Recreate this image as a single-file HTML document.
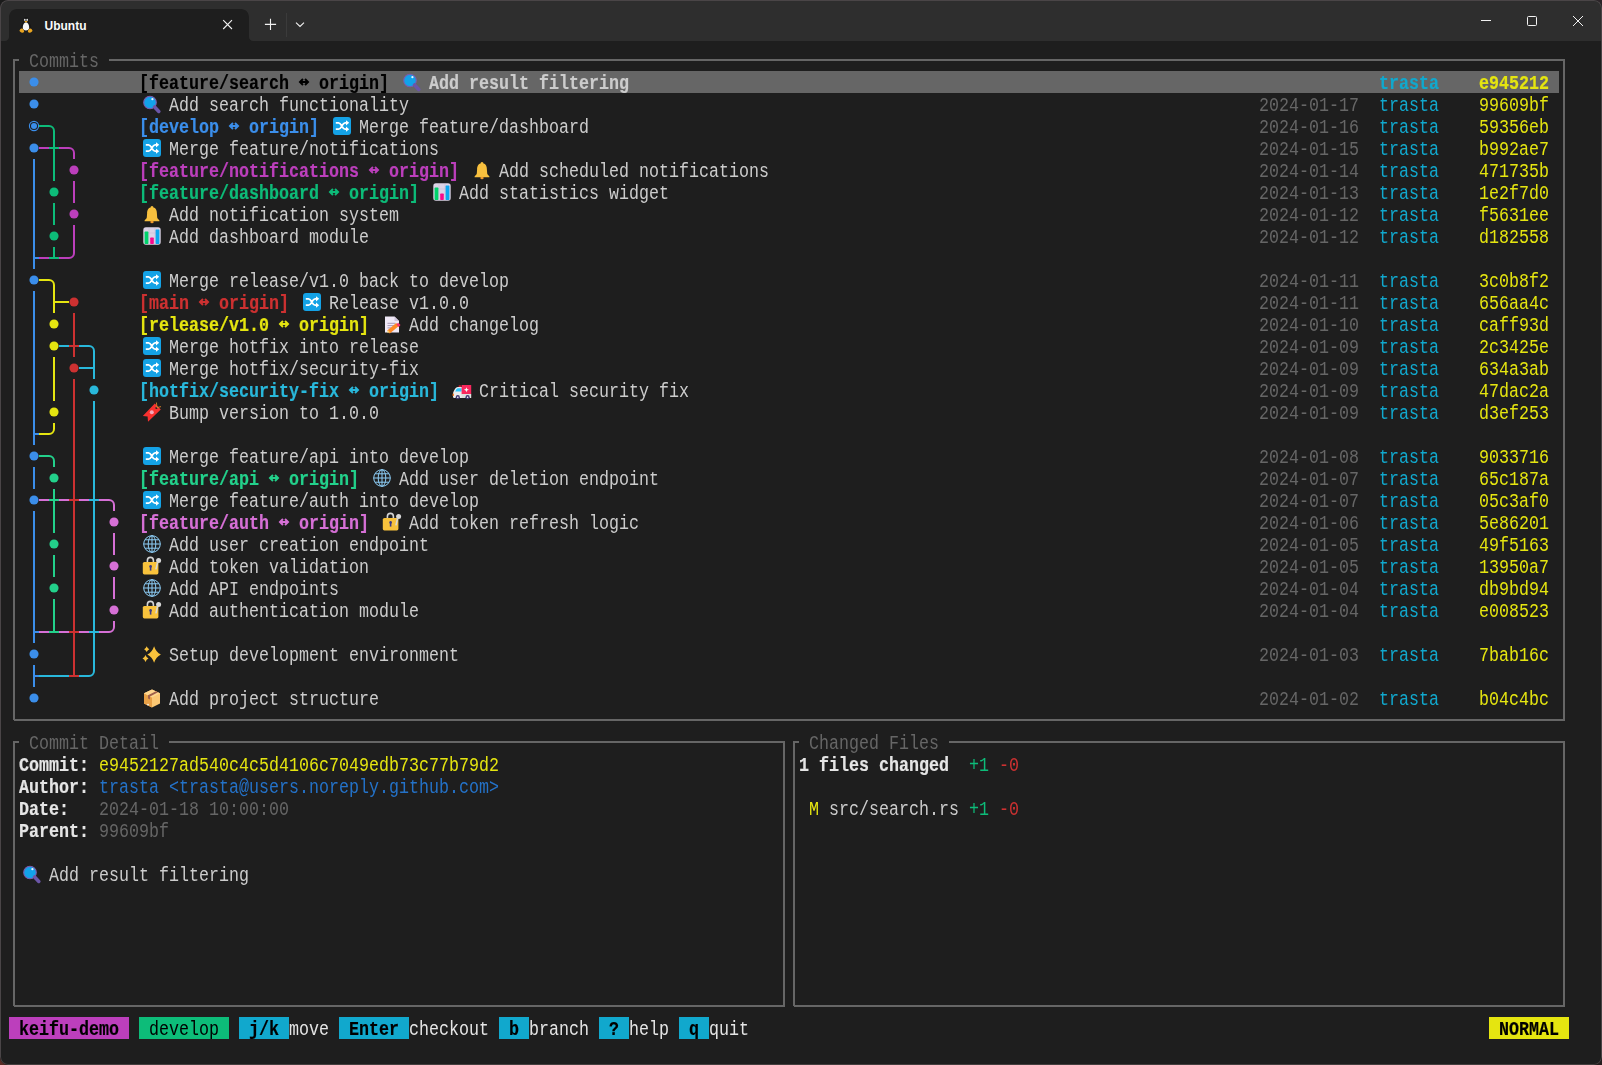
<!DOCTYPE html><html><head><meta charset="utf-8"><title>keifu</title><style>

html,body{margin:0;padding:0}
body{width:1602px;height:1065px;overflow:hidden;background:#2a2327;position:relative}
.cn{position:absolute;width:12px;height:12px}
#win{position:absolute;left:0;top:0;width:1602px;height:1065px;background:#1e1e1e;border-radius:8px;overflow:hidden}
#frame{position:absolute;left:0;top:0;width:1600px;height:1063px;border:1px solid #4a4547;border-bottom-color:#453f3f;border-radius:8px;pointer-events:none}
.t{position:absolute;white-space:pre;font-family:"Liberation Mono",monospace;font-size:20px;line-height:22px;transform:scaleX(0.8333);transform-origin:0 0}
.b{font-weight:bold;-webkit-text-stroke:0.2px currentColor}
.bgc{position:absolute;height:22px}
svg{overflow:visible}
#txt{position:absolute;left:0;top:0;width:1602px;height:1065px;will-change:transform}

</style></head><body><div class="cn" style="left:0;top:0;background:#1b1b1b"></div><div class="cn" style="right:0;top:0;background:#2c2429"></div><div class="cn" style="left:0;bottom:0;background:#5a2b25"></div><div class="cn" style="right:0;bottom:0;background:#261d1d"></div><div id="win">
<div style="position:absolute;left:0;top:0;width:1602px;height:41px;background:#2e2e2e"></div>
<svg style="position:absolute;left:0;top:0" width="1602" height="1065"><path d="M0 41H5C7.2 41 9 39.2 9 37V17C9 12.6 12.6 9 17 9H241C245.4 9 249 12.6 249 17V37C249 39.2 250.8 41 253 41Z" fill="#1e1e1e"/><path d="M223.2 20.2L232 29M232 20.2L223.2 29" stroke="#f2f2f2" stroke-width="1.1"/><path d="M270.5 18.8V30M264.9 24.4H276.1" stroke="#f2f2f2" stroke-width="1.1"/><path d="M286.6 13V37" stroke="#3d3d3d" stroke-width="1"/><path d="M296 22.6L300 26.4L304 22.6" stroke="#f2f2f2" stroke-width="1.1" fill="none"/><path d="M1481 20.5H1491" stroke="#f2f2f2" stroke-width="1"/><rect x="1527.5" y="16.5" width="9" height="9" rx="1" stroke="#f2f2f2" stroke-width="1" fill="none"/><path d="M1573 16L1583 26M1583 16L1573 26" stroke="#f2f2f2" stroke-width="1"/><g transform="translate(19.5,17)"><path d="M6.5 0C4.6 0 3.8 1.5 3.8 3.4C3.8 4.8 3.3 5.8 2.4 7.2C1.3 8.9 0.9 10.6 1.2 12.2L4 14.2H9L11.8 12.2C12.1 10.6 11.7 8.9 10.6 7.2C9.7 5.8 9.2 4.8 9.2 3.4C9.2 1.5 8.4 0 6.5 0Z" fill="#161616"/><path d="M6.5 5.2C4.6 5.2 3.5 7.8 3.3 10C3.1 12 4.4 13.6 6.5 13.6C8.6 13.6 9.9 12 9.7 10C9.5 7.8 8.4 5.2 6.5 5.2Z" fill="#f7f7f7"/><ellipse cx="5.3" cy="2.9" rx="0.9" ry="1.2" fill="#e8e8e8"/><ellipse cx="7.7" cy="2.9" rx="0.9" ry="1.2" fill="#e8e8e8"/><circle cx="5.5" cy="3.2" r="0.45" fill="#111"/><circle cx="7.5" cy="3.2" r="0.45" fill="#111"/><path d="M4.9 4.4C5.6 3.9 7.4 3.9 8.1 4.4L6.5 5.8Z" fill="#eaa520"/><path d="M0 13.8C0.2 12 1.7 10.9 2.9 11.6C3.6 12 4.2 13.2 4.6 14.1C4.9 15.2 3.8 16 2.6 15.8C1.6 15.6 0.4 14.9 0 13.8Z" fill="#eaa520"/><path d="M13 13.8C12.8 12 11.3 10.9 10.1 11.6C9.4 12 8.8 13.2 8.4 14.1C8.1 15.2 9.2 16 10.4 15.8C11.4 15.6 12.6 14.9 13 13.8Z" fill="#eaa520"/></g></svg>
<div style="position:absolute;left:44.5px;top:17px;font:bold 12px/18px 'Liberation Sans',sans-serif;color:#fafafa">Ubuntu</div>
<div id="txt">
<span class="t" style="left:29px;top:51px;color:#666666">Commits</span>
<span class="t" style="left:29px;top:733px;color:#666666">Commit Detail</span>
<span class="t" style="left:809px;top:733px;color:#666666">Changed Files</span>
<div class="bgc" style="left:19px;top:71px;width:1540px;background:#666666"></div>
<span class="t b" style="left:139px;top:73px;color:#000000">[feature/search </span>
<span class="t b" style="left:309px;top:73px;color:#000000"> origin]</span>
<span class="t b" style="left:429px;top:73px;color:#cccccc">Add result filtering</span>
<span class="t b" style="left:1379px;top:73px;color:#11a8cd">trasta</span>
<span class="t b" style="left:1479px;top:73px;color:#e5e510">e945212</span>
<span class="t" style="left:169px;top:95px;color:#cccccc">Add search functionality</span>
<span class="t" style="left:1259px;top:95px;color:#666666">2024-01-17</span>
<span class="t" style="left:1379px;top:95px;color:#11a8cd">trasta</span>
<span class="t" style="left:1479px;top:95px;color:#e5e510">99609bf</span>
<span class="t b" style="left:139px;top:117px;color:#3b8eea">[develop </span>
<span class="t b" style="left:239px;top:117px;color:#3b8eea"> origin]</span>
<span class="t" style="left:359px;top:117px;color:#cccccc">Merge feature/dashboard</span>
<span class="t" style="left:1259px;top:117px;color:#666666">2024-01-16</span>
<span class="t" style="left:1379px;top:117px;color:#11a8cd">trasta</span>
<span class="t" style="left:1479px;top:117px;color:#e5e510">59356eb</span>
<span class="t" style="left:169px;top:139px;color:#cccccc">Merge feature/notifications</span>
<span class="t" style="left:1259px;top:139px;color:#666666">2024-01-15</span>
<span class="t" style="left:1379px;top:139px;color:#11a8cd">trasta</span>
<span class="t" style="left:1479px;top:139px;color:#e5e510">b992ae7</span>
<span class="t b" style="left:139px;top:161px;color:#bc3fbc">[feature/notifications </span>
<span class="t b" style="left:379px;top:161px;color:#bc3fbc"> origin]</span>
<span class="t" style="left:499px;top:161px;color:#cccccc">Add scheduled notifications</span>
<span class="t" style="left:1259px;top:161px;color:#666666">2024-01-14</span>
<span class="t" style="left:1379px;top:161px;color:#11a8cd">trasta</span>
<span class="t" style="left:1479px;top:161px;color:#e5e510">471735b</span>
<span class="t b" style="left:139px;top:183px;color:#0dbc79">[feature/dashboard </span>
<span class="t b" style="left:339px;top:183px;color:#0dbc79"> origin]</span>
<span class="t" style="left:459px;top:183px;color:#cccccc">Add statistics widget</span>
<span class="t" style="left:1259px;top:183px;color:#666666">2024-01-13</span>
<span class="t" style="left:1379px;top:183px;color:#11a8cd">trasta</span>
<span class="t" style="left:1479px;top:183px;color:#e5e510">1e2f7d0</span>
<span class="t" style="left:169px;top:205px;color:#cccccc">Add notification system</span>
<span class="t" style="left:1259px;top:205px;color:#666666">2024-01-12</span>
<span class="t" style="left:1379px;top:205px;color:#11a8cd">trasta</span>
<span class="t" style="left:1479px;top:205px;color:#e5e510">f5631ee</span>
<span class="t" style="left:169px;top:227px;color:#cccccc">Add dashboard module</span>
<span class="t" style="left:1259px;top:227px;color:#666666">2024-01-12</span>
<span class="t" style="left:1379px;top:227px;color:#11a8cd">trasta</span>
<span class="t" style="left:1479px;top:227px;color:#e5e510">d182558</span>
<span class="t" style="left:169px;top:271px;color:#cccccc">Merge release/v1.0 back to develop</span>
<span class="t" style="left:1259px;top:271px;color:#666666">2024-01-11</span>
<span class="t" style="left:1379px;top:271px;color:#11a8cd">trasta</span>
<span class="t" style="left:1479px;top:271px;color:#e5e510">3c0b8f2</span>
<span class="t b" style="left:139px;top:293px;color:#cd3131">[main </span>
<span class="t b" style="left:209px;top:293px;color:#cd3131"> origin]</span>
<span class="t" style="left:329px;top:293px;color:#cccccc">Release v1.0.0</span>
<span class="t" style="left:1259px;top:293px;color:#666666">2024-01-11</span>
<span class="t" style="left:1379px;top:293px;color:#11a8cd">trasta</span>
<span class="t" style="left:1479px;top:293px;color:#e5e510">656aa4c</span>
<span class="t b" style="left:139px;top:315px;color:#e5e510">[release/v1.0 </span>
<span class="t b" style="left:289px;top:315px;color:#e5e510"> origin]</span>
<span class="t" style="left:409px;top:315px;color:#cccccc">Add changelog</span>
<span class="t" style="left:1259px;top:315px;color:#666666">2024-01-10</span>
<span class="t" style="left:1379px;top:315px;color:#11a8cd">trasta</span>
<span class="t" style="left:1479px;top:315px;color:#e5e510">caff93d</span>
<span class="t" style="left:169px;top:337px;color:#cccccc">Merge hotfix into release</span>
<span class="t" style="left:1259px;top:337px;color:#666666">2024-01-09</span>
<span class="t" style="left:1379px;top:337px;color:#11a8cd">trasta</span>
<span class="t" style="left:1479px;top:337px;color:#e5e510">2c3425e</span>
<span class="t" style="left:169px;top:359px;color:#cccccc">Merge hotfix/security-fix</span>
<span class="t" style="left:1259px;top:359px;color:#666666">2024-01-09</span>
<span class="t" style="left:1379px;top:359px;color:#11a8cd">trasta</span>
<span class="t" style="left:1479px;top:359px;color:#e5e510">634a3ab</span>
<span class="t b" style="left:139px;top:381px;color:#29b8db">[hotfix/security-fix </span>
<span class="t b" style="left:359px;top:381px;color:#29b8db"> origin]</span>
<span class="t" style="left:479px;top:381px;color:#cccccc">Critical security fix</span>
<span class="t" style="left:1259px;top:381px;color:#666666">2024-01-09</span>
<span class="t" style="left:1379px;top:381px;color:#11a8cd">trasta</span>
<span class="t" style="left:1479px;top:381px;color:#e5e510">47dac2a</span>
<span class="t" style="left:169px;top:403px;color:#cccccc">Bump version to 1.0.0</span>
<span class="t" style="left:1259px;top:403px;color:#666666">2024-01-09</span>
<span class="t" style="left:1379px;top:403px;color:#11a8cd">trasta</span>
<span class="t" style="left:1479px;top:403px;color:#e5e510">d3ef253</span>
<span class="t" style="left:169px;top:447px;color:#cccccc">Merge feature/api into develop</span>
<span class="t" style="left:1259px;top:447px;color:#666666">2024-01-08</span>
<span class="t" style="left:1379px;top:447px;color:#11a8cd">trasta</span>
<span class="t" style="left:1479px;top:447px;color:#e5e510">9033716</span>
<span class="t b" style="left:139px;top:469px;color:#23d18b">[feature/api </span>
<span class="t b" style="left:279px;top:469px;color:#23d18b"> origin]</span>
<span class="t" style="left:399px;top:469px;color:#cccccc">Add user deletion endpoint</span>
<span class="t" style="left:1259px;top:469px;color:#666666">2024-01-07</span>
<span class="t" style="left:1379px;top:469px;color:#11a8cd">trasta</span>
<span class="t" style="left:1479px;top:469px;color:#e5e510">65c187a</span>
<span class="t" style="left:169px;top:491px;color:#cccccc">Merge feature/auth into develop</span>
<span class="t" style="left:1259px;top:491px;color:#666666">2024-01-07</span>
<span class="t" style="left:1379px;top:491px;color:#11a8cd">trasta</span>
<span class="t" style="left:1479px;top:491px;color:#e5e510">05c3af0</span>
<span class="t b" style="left:139px;top:513px;color:#d670d6">[feature/auth </span>
<span class="t b" style="left:289px;top:513px;color:#d670d6"> origin]</span>
<span class="t" style="left:409px;top:513px;color:#cccccc">Add token refresh logic</span>
<span class="t" style="left:1259px;top:513px;color:#666666">2024-01-06</span>
<span class="t" style="left:1379px;top:513px;color:#11a8cd">trasta</span>
<span class="t" style="left:1479px;top:513px;color:#e5e510">5e86201</span>
<span class="t" style="left:169px;top:535px;color:#cccccc">Add user creation endpoint</span>
<span class="t" style="left:1259px;top:535px;color:#666666">2024-01-05</span>
<span class="t" style="left:1379px;top:535px;color:#11a8cd">trasta</span>
<span class="t" style="left:1479px;top:535px;color:#e5e510">49f5163</span>
<span class="t" style="left:169px;top:557px;color:#cccccc">Add token validation</span>
<span class="t" style="left:1259px;top:557px;color:#666666">2024-01-05</span>
<span class="t" style="left:1379px;top:557px;color:#11a8cd">trasta</span>
<span class="t" style="left:1479px;top:557px;color:#e5e510">13950a7</span>
<span class="t" style="left:169px;top:579px;color:#cccccc">Add API endpoints</span>
<span class="t" style="left:1259px;top:579px;color:#666666">2024-01-04</span>
<span class="t" style="left:1379px;top:579px;color:#11a8cd">trasta</span>
<span class="t" style="left:1479px;top:579px;color:#e5e510">db9bd94</span>
<span class="t" style="left:169px;top:601px;color:#cccccc">Add authentication module</span>
<span class="t" style="left:1259px;top:601px;color:#666666">2024-01-04</span>
<span class="t" style="left:1379px;top:601px;color:#11a8cd">trasta</span>
<span class="t" style="left:1479px;top:601px;color:#e5e510">e008523</span>
<span class="t" style="left:169px;top:645px;color:#cccccc">Setup development environment</span>
<span class="t" style="left:1259px;top:645px;color:#666666">2024-01-03</span>
<span class="t" style="left:1379px;top:645px;color:#11a8cd">trasta</span>
<span class="t" style="left:1479px;top:645px;color:#e5e510">7bab16c</span>
<span class="t" style="left:169px;top:689px;color:#cccccc">Add project structure</span>
<span class="t" style="left:1259px;top:689px;color:#666666">2024-01-02</span>
<span class="t" style="left:1379px;top:689px;color:#11a8cd">trasta</span>
<span class="t" style="left:1479px;top:689px;color:#e5e510">b04c4bc</span>
<span class="t b" style="left:19px;top:755px;color:#e5e5e5">Commit:</span>
<span class="t" style="left:99px;top:755px;color:#e5e510">e9452127ad540c4c5d4106c7049edb73c77b79d2</span>
<span class="t b" style="left:19px;top:777px;color:#e5e5e5">Author:</span>
<span class="t" style="left:99px;top:777px;color:#2472c8">trasta &lt;trasta@users.noreply.github.com&gt;</span>
<span class="t b" style="left:19px;top:799px;color:#e5e5e5">Date:</span>
<span class="t" style="left:99px;top:799px;color:#666666">2024-01-18 10:00:00</span>
<span class="t b" style="left:19px;top:821px;color:#e5e5e5">Parent:</span>
<span class="t" style="left:99px;top:821px;color:#666666">99609bf</span>
<span class="t" style="left:49px;top:865px;color:#cccccc">Add result filtering</span>
<span class="t b" style="left:799px;top:755px;color:#e5e5e5">1 files changed</span>
<span class="t" style="left:969px;top:755px;color:#0dbc79">+1</span>
<span class="t" style="left:999px;top:755px;color:#cd3131">-0</span>
<span class="t" style="left:809px;top:799px;color:#e5e510">M</span>
<span class="t" style="left:829px;top:799px;color:#cccccc">src/search.rs</span>
<span class="t" style="left:969px;top:799px;color:#0dbc79">+1</span>
<span class="t" style="left:999px;top:799px;color:#cd3131">-0</span>
<div class="bgc" style="left:9px;top:1017px;width:120px;background:#bc3fbc"></div>
<span class="t b" style="left:9px;top:1019px;color:#000000"> keifu-demo </span>
<div class="bgc" style="left:139px;top:1017px;width:90px;background:#0dbc79"></div>
<span class="t" style="left:139px;top:1019px;color:#000000"> develop </span>
<div class="bgc" style="left:239px;top:1017px;width:50px;background:#11a8cd"></div>
<span class="t b" style="left:239px;top:1019px;color:#000000"> j/k </span>
<span class="t" style="left:289px;top:1019px;color:#e5e5e5">move</span>
<div class="bgc" style="left:339px;top:1017px;width:70px;background:#11a8cd"></div>
<span class="t b" style="left:339px;top:1019px;color:#000000"> Enter </span>
<span class="t" style="left:409px;top:1019px;color:#e5e5e5">checkout</span>
<div class="bgc" style="left:499px;top:1017px;width:30px;background:#11a8cd"></div>
<span class="t b" style="left:499px;top:1019px;color:#000000"> b </span>
<span class="t" style="left:529px;top:1019px;color:#e5e5e5">branch</span>
<div class="bgc" style="left:599px;top:1017px;width:30px;background:#11a8cd"></div>
<span class="t b" style="left:599px;top:1019px;color:#000000"> ? </span>
<span class="t" style="left:629px;top:1019px;color:#e5e5e5">help</span>
<div class="bgc" style="left:679px;top:1017px;width:30px;background:#11a8cd"></div>
<span class="t b" style="left:679px;top:1019px;color:#000000"> q </span>
<span class="t" style="left:709px;top:1019px;color:#e5e5e5">quit</span>
<div class="bgc" style="left:1489px;top:1017px;width:80px;background:#e5e510"></div>
<span class="t b" style="left:1489px;top:1019px;color:#000000"> NORMAL </span>
</div>
<svg style="position:absolute;left:0;top:0" width="1602" height="1065"><path d="M14 720V60H19M109 60H1564V720H14" stroke="#666666" stroke-width="2" fill="none"/><path d="M14 1006V742H19M169 742H784V1006H14" stroke="#666666" stroke-width="2" fill="none"/><path d="M794 1006V742H799M949 742H1564V1006H794" stroke="#666666" stroke-width="2" fill="none"/><path d="M300.5 82H307.5M303 79L300 82L303 85M305 79L308 82L305 85" stroke="#000000" stroke-width="2" fill="none"/><path d="M230.5 126H237.5M233 123L230 126L233 129M235 123L238 126L235 129" stroke="#3b8eea" stroke-width="2" fill="none"/><path d="M370.5 170H377.5M373 167L370 170L373 173M375 167L378 170L375 173" stroke="#bc3fbc" stroke-width="2" fill="none"/><path d="M330.5 192H337.5M333 189L330 192L333 195M335 189L338 192L335 195" stroke="#0dbc79" stroke-width="2" fill="none"/><path d="M200.5 302H207.5M203 299L200 302L203 305M205 299L208 302L205 305" stroke="#cd3131" stroke-width="2" fill="none"/><path d="M280.5 324H287.5M283 321L280 324L283 327M285 321L288 324L285 327" stroke="#e5e510" stroke-width="2" fill="none"/><path d="M350.5 390H357.5M353 387L350 390L353 393M355 387L358 390L355 393" stroke="#29b8db" stroke-width="2" fill="none"/><path d="M270.5 478H277.5M273 475L270 478L273 481M275 475L278 478L275 481" stroke="#23d18b" stroke-width="2" fill="none"/><path d="M280.5 522H287.5M283 519L280 522L283 525M285 519L288 522L285 525" stroke="#d670d6" stroke-width="2" fill="none"/><circle cx="34" cy="82" r="4.55" fill="#3b8eea"/><circle cx="34" cy="104" r="4.55" fill="#3b8eea"/><circle cx="34" cy="126" r="4.6" fill="none" stroke="#3b8eea" stroke-width="1.1"/><circle cx="34" cy="126" r="3" fill="#3b8eea"/><path d="M39 126H49" stroke="#0dbc79" stroke-width="2" fill="none"/><path d="M49 126H49A5 5 0 0 1 54 131V137" stroke="#0dbc79" stroke-width="2" fill="none"/><circle cx="34" cy="148" r="4.55" fill="#3b8eea"/><path d="M39 148H49" stroke="#bc3fbc" stroke-width="2" fill="none"/><path d="M54 137V159M49 148H59" stroke="#0dbc79" stroke-width="2" fill="none"/><path d="M59 148H69" stroke="#bc3fbc" stroke-width="2" fill="none"/><path d="M69 148H69A5 5 0 0 1 74 153V159" stroke="#bc3fbc" stroke-width="2" fill="none"/><path d="M34 159V181" stroke="#3b8eea" stroke-width="2" fill="none"/><path d="M54 159V181" stroke="#0dbc79" stroke-width="2" fill="none"/><circle cx="74" cy="170" r="4.55" fill="#bc3fbc"/><path d="M34 181V203" stroke="#3b8eea" stroke-width="2" fill="none"/><circle cx="54" cy="192" r="4.55" fill="#0dbc79"/><path d="M74 181V203" stroke="#bc3fbc" stroke-width="2" fill="none"/><path d="M34 203V225" stroke="#3b8eea" stroke-width="2" fill="none"/><path d="M54 203V225" stroke="#0dbc79" stroke-width="2" fill="none"/><circle cx="74" cy="214" r="4.55" fill="#bc3fbc"/><path d="M34 225V247" stroke="#3b8eea" stroke-width="2" fill="none"/><circle cx="54" cy="236" r="4.55" fill="#0dbc79"/><path d="M74 225V247" stroke="#bc3fbc" stroke-width="2" fill="none"/><path d="M34 247V269M34 258H39" stroke="#3b8eea" stroke-width="2" fill="none"/><path d="M39 258H49" stroke="#bc3fbc" stroke-width="2" fill="none"/><path d="M54 247V258M49 258H59" stroke="#0dbc79" stroke-width="2" fill="none"/><path d="M59 258H69" stroke="#bc3fbc" stroke-width="2" fill="none"/><path d="M69 258H69A5 5 0 0 0 74 253V247" stroke="#bc3fbc" stroke-width="2" fill="none"/><circle cx="34" cy="280" r="4.55" fill="#3b8eea"/><path d="M39 280H49" stroke="#e5e510" stroke-width="2" fill="none"/><path d="M49 280H49A5 5 0 0 1 54 285V291" stroke="#e5e510" stroke-width="2" fill="none"/><path d="M34 291V313" stroke="#3b8eea" stroke-width="2" fill="none"/><path d="M54 291V313M54 302H59" stroke="#e5e510" stroke-width="2" fill="none"/><path d="M59 302H69" stroke="#e5e510" stroke-width="2" fill="none"/><circle cx="74" cy="302" r="4.55" fill="#cd3131"/><path d="M34 313V335" stroke="#3b8eea" stroke-width="2" fill="none"/><circle cx="54" cy="324" r="4.55" fill="#e5e510"/><path d="M74 313V335" stroke="#cd3131" stroke-width="2" fill="none"/><path d="M34 335V357" stroke="#3b8eea" stroke-width="2" fill="none"/><circle cx="54" cy="346" r="4.55" fill="#e5e510"/><path d="M59 346H69" stroke="#29b8db" stroke-width="2" fill="none"/><path d="M74 335V357M69 346H79" stroke="#cd3131" stroke-width="2" fill="none"/><path d="M79 346H89" stroke="#29b8db" stroke-width="2" fill="none"/><path d="M89 346H89A5 5 0 0 1 94 351V357" stroke="#29b8db" stroke-width="2" fill="none"/><path d="M34 357V379" stroke="#3b8eea" stroke-width="2" fill="none"/><path d="M54 357V379" stroke="#e5e510" stroke-width="2" fill="none"/><circle cx="74" cy="368" r="4.55" fill="#cd3131"/><path d="M79 368H89" stroke="#29b8db" stroke-width="2" fill="none"/><path d="M94 357V379M89 368H94" stroke="#29b8db" stroke-width="2" fill="none"/><path d="M34 379V401" stroke="#3b8eea" stroke-width="2" fill="none"/><path d="M54 379V401" stroke="#e5e510" stroke-width="2" fill="none"/><path d="M74 379V401" stroke="#cd3131" stroke-width="2" fill="none"/><circle cx="94" cy="390" r="4.55" fill="#29b8db"/><path d="M34 401V423" stroke="#3b8eea" stroke-width="2" fill="none"/><circle cx="54" cy="412" r="4.55" fill="#e5e510"/><path d="M74 401V423" stroke="#cd3131" stroke-width="2" fill="none"/><path d="M94 401V423" stroke="#29b8db" stroke-width="2" fill="none"/><path d="M34 423V445M34 434H39" stroke="#3b8eea" stroke-width="2" fill="none"/><path d="M39 434H49" stroke="#e5e510" stroke-width="2" fill="none"/><path d="M49 434H49A5 5 0 0 0 54 429V423" stroke="#e5e510" stroke-width="2" fill="none"/><path d="M74 423V445" stroke="#cd3131" stroke-width="2" fill="none"/><path d="M94 423V445" stroke="#29b8db" stroke-width="2" fill="none"/><circle cx="34" cy="456" r="4.55" fill="#3b8eea"/><path d="M39 456H49" stroke="#23d18b" stroke-width="2" fill="none"/><path d="M49 456H49A5 5 0 0 1 54 461V467" stroke="#23d18b" stroke-width="2" fill="none"/><path d="M74 445V467" stroke="#cd3131" stroke-width="2" fill="none"/><path d="M94 445V467" stroke="#29b8db" stroke-width="2" fill="none"/><path d="M34 467V489" stroke="#3b8eea" stroke-width="2" fill="none"/><circle cx="54" cy="478" r="4.55" fill="#23d18b"/><path d="M74 467V489" stroke="#cd3131" stroke-width="2" fill="none"/><path d="M94 467V489" stroke="#29b8db" stroke-width="2" fill="none"/><circle cx="34" cy="500" r="4.55" fill="#3b8eea"/><path d="M39 500H49" stroke="#d670d6" stroke-width="2" fill="none"/><path d="M54 489V511M49 500H59" stroke="#23d18b" stroke-width="2" fill="none"/><path d="M59 500H69" stroke="#d670d6" stroke-width="2" fill="none"/><path d="M74 489V511M69 500H79" stroke="#cd3131" stroke-width="2" fill="none"/><path d="M79 500H89" stroke="#d670d6" stroke-width="2" fill="none"/><path d="M94 489V511M89 500H99" stroke="#29b8db" stroke-width="2" fill="none"/><path d="M99 500H109" stroke="#d670d6" stroke-width="2" fill="none"/><path d="M109 500H109A5 5 0 0 1 114 505V511" stroke="#d670d6" stroke-width="2" fill="none"/><path d="M34 511V533" stroke="#3b8eea" stroke-width="2" fill="none"/><path d="M54 511V533" stroke="#23d18b" stroke-width="2" fill="none"/><path d="M74 511V533" stroke="#cd3131" stroke-width="2" fill="none"/><path d="M94 511V533" stroke="#29b8db" stroke-width="2" fill="none"/><circle cx="114" cy="522" r="4.55" fill="#d670d6"/><path d="M34 533V555" stroke="#3b8eea" stroke-width="2" fill="none"/><circle cx="54" cy="544" r="4.55" fill="#23d18b"/><path d="M74 533V555" stroke="#cd3131" stroke-width="2" fill="none"/><path d="M94 533V555" stroke="#29b8db" stroke-width="2" fill="none"/><path d="M114 533V555" stroke="#d670d6" stroke-width="2" fill="none"/><path d="M34 555V577" stroke="#3b8eea" stroke-width="2" fill="none"/><path d="M54 555V577" stroke="#23d18b" stroke-width="2" fill="none"/><path d="M74 555V577" stroke="#cd3131" stroke-width="2" fill="none"/><path d="M94 555V577" stroke="#29b8db" stroke-width="2" fill="none"/><circle cx="114" cy="566" r="4.55" fill="#d670d6"/><path d="M34 577V599" stroke="#3b8eea" stroke-width="2" fill="none"/><circle cx="54" cy="588" r="4.55" fill="#23d18b"/><path d="M74 577V599" stroke="#cd3131" stroke-width="2" fill="none"/><path d="M94 577V599" stroke="#29b8db" stroke-width="2" fill="none"/><path d="M114 577V599" stroke="#d670d6" stroke-width="2" fill="none"/><path d="M34 599V621" stroke="#3b8eea" stroke-width="2" fill="none"/><path d="M54 599V621" stroke="#23d18b" stroke-width="2" fill="none"/><path d="M74 599V621" stroke="#cd3131" stroke-width="2" fill="none"/><path d="M94 599V621" stroke="#29b8db" stroke-width="2" fill="none"/><circle cx="114" cy="610" r="4.55" fill="#d670d6"/><path d="M34 621V643M34 632H39" stroke="#3b8eea" stroke-width="2" fill="none"/><path d="M39 632H49" stroke="#d670d6" stroke-width="2" fill="none"/><path d="M54 621V632M49 632H59" stroke="#23d18b" stroke-width="2" fill="none"/><path d="M59 632H69" stroke="#d670d6" stroke-width="2" fill="none"/><path d="M74 621V643M69 632H79" stroke="#cd3131" stroke-width="2" fill="none"/><path d="M79 632H89" stroke="#d670d6" stroke-width="2" fill="none"/><path d="M94 621V643M89 632H99" stroke="#29b8db" stroke-width="2" fill="none"/><path d="M99 632H109" stroke="#d670d6" stroke-width="2" fill="none"/><path d="M109 632H109A5 5 0 0 0 114 627V621" stroke="#d670d6" stroke-width="2" fill="none"/><circle cx="34" cy="654" r="4.55" fill="#3b8eea"/><path d="M74 643V665" stroke="#cd3131" stroke-width="2" fill="none"/><path d="M94 643V665" stroke="#29b8db" stroke-width="2" fill="none"/><path d="M34 665V687M34 676H39" stroke="#3b8eea" stroke-width="2" fill="none"/><path d="M39 676H49" stroke="#29b8db" stroke-width="2" fill="none"/><path d="M49 676H59" stroke="#29b8db" stroke-width="2" fill="none"/><path d="M59 676H69" stroke="#29b8db" stroke-width="2" fill="none"/><path d="M74 665V676M69 676H79" stroke="#cd3131" stroke-width="2" fill="none"/><path d="M79 676H89" stroke="#29b8db" stroke-width="2" fill="none"/><path d="M89 676H89A5 5 0 0 0 94 671V665" stroke="#29b8db" stroke-width="2" fill="none"/><circle cx="34" cy="698" r="4.55" fill="#3b8eea"/><g transform="translate(403,73)"><circle cx="7" cy="7.5" r="6.3" fill="#12a3ea" stroke="#7a5cb0" stroke-width="1.1"/><path d="M11.6 12L15.8 16.4" stroke="#6b56a8" stroke-width="3.6" stroke-linecap="round"/><circle cx="9.4" cy="4.2" r="1.1" fill="#e8f6ff"/></g><g transform="translate(143,95)"><circle cx="7" cy="7.5" r="6.3" fill="#12a3ea" stroke="#7a5cb0" stroke-width="1.1"/><path d="M11.6 12L15.8 16.4" stroke="#6b56a8" stroke-width="3.6" stroke-linecap="round"/><circle cx="9.4" cy="4.2" r="1.1" fill="#e8f6ff"/></g><g transform="translate(333,117)"><rect x="0" y="0" width="18" height="18" rx="3" fill="#14a2e6"/><path d="M2.8 5.8H5.6C8.6 5.8 9 12.2 12 12.2H13.6M2.8 12.2H5.6C8.6 12.2 9 5.8 12 5.8H13.6" stroke="#fff" stroke-width="1.7" fill="none"/><path d="M13 3.2L16.2 5.8L13 8.4ZM13 9.6L16.2 12.2L13 14.8Z" fill="#fff"/></g><g transform="translate(143,139)"><rect x="0" y="0" width="18" height="18" rx="3" fill="#14a2e6"/><path d="M2.8 5.8H5.6C8.6 5.8 9 12.2 12 12.2H13.6M2.8 12.2H5.6C8.6 12.2 9 5.8 12 5.8H13.6" stroke="#fff" stroke-width="1.7" fill="none"/><path d="M13 3.2L16.2 5.8L13 8.4ZM13 9.6L16.2 12.2L13 14.8Z" fill="#fff"/></g><g transform="translate(473,161)"><path d="M9 1C7.9 1 7.6 1.9 7.6 2.6C4.8 3.3 4.1 6 4.1 8.6L3.8 12.6C3.5 14 2 14.8 1.6 15.4V16.3H16.4V15.4C16 14.8 14.5 14 14.2 12.6L13.9 8.6C13.9 6 13.2 3.3 10.4 2.6C10.4 1.9 10.1 1 9 1Z" fill="#f8c03e"/><ellipse cx="9" cy="17" rx="1.7" ry="1.2" fill="#f09a2c"/></g><g transform="translate(433,183)"><rect x="0.3" y="0.3" width="17.4" height="17.4" rx="2.6" fill="#dcd3e6"/><path d="M6 1V17M12 1V17M1 6H17" stroke="#c9bdd6" stroke-width="0.6"/><rect x="1.6" y="4.6" width="3.8" height="12.3" rx="0.6" fill="#00d26a"/><rect x="7.2" y="10.6" width="3.6" height="6.3" rx="0.6" fill="#f70a8d"/><rect x="12.6" y="2.4" width="3.8" height="14.5" rx="0.6" fill="#0ca8ef"/></g><g transform="translate(143,205)"><path d="M9 1C7.9 1 7.6 1.9 7.6 2.6C4.8 3.3 4.1 6 4.1 8.6L3.8 12.6C3.5 14 2 14.8 1.6 15.4V16.3H16.4V15.4C16 14.8 14.5 14 14.2 12.6L13.9 8.6C13.9 6 13.2 3.3 10.4 2.6C10.4 1.9 10.1 1 9 1Z" fill="#f8c03e"/><ellipse cx="9" cy="17" rx="1.7" ry="1.2" fill="#f09a2c"/></g><g transform="translate(143,227)"><rect x="0.3" y="0.3" width="17.4" height="17.4" rx="2.6" fill="#dcd3e6"/><path d="M6 1V17M12 1V17M1 6H17" stroke="#c9bdd6" stroke-width="0.6"/><rect x="1.6" y="4.6" width="3.8" height="12.3" rx="0.6" fill="#00d26a"/><rect x="7.2" y="10.6" width="3.6" height="6.3" rx="0.6" fill="#f70a8d"/><rect x="12.6" y="2.4" width="3.8" height="14.5" rx="0.6" fill="#0ca8ef"/></g><g transform="translate(143,271)"><rect x="0" y="0" width="18" height="18" rx="3" fill="#14a2e6"/><path d="M2.8 5.8H5.6C8.6 5.8 9 12.2 12 12.2H13.6M2.8 12.2H5.6C8.6 12.2 9 5.8 12 5.8H13.6" stroke="#fff" stroke-width="1.7" fill="none"/><path d="M13 3.2L16.2 5.8L13 8.4ZM13 9.6L16.2 12.2L13 14.8Z" fill="#fff"/></g><g transform="translate(303,293)"><rect x="0" y="0" width="18" height="18" rx="3" fill="#14a2e6"/><path d="M2.8 5.8H5.6C8.6 5.8 9 12.2 12 12.2H13.6M2.8 12.2H5.6C8.6 12.2 9 5.8 12 5.8H13.6" stroke="#fff" stroke-width="1.7" fill="none"/><path d="M13 3.2L16.2 5.8L13 8.4ZM13 9.6L16.2 12.2L13 14.8Z" fill="#fff"/></g><g transform="translate(383,315)"><path d="M2 1.5H11.5L16 6V17.5H2Z" fill="#efe8f6"/><path d="M11.5 1.5V6H16Z" fill="#cfc4dc"/><path d="M4.5 8.3H12.5M4.5 10.6H11M4.5 12.9H8" stroke="#a99ab8" stroke-width="1"/><path d="M5.5 17L14.5 9.5" stroke="#ff8a25" stroke-width="4"/><path d="M14.2 8.6L16.6 11" stroke="#f8336a" stroke-width="2.6"/><path d="M4 17.8L5.2 15.2L7 17.2Z" fill="#f9d36a"/></g><g transform="translate(143,337)"><rect x="0" y="0" width="18" height="18" rx="3" fill="#14a2e6"/><path d="M2.8 5.8H5.6C8.6 5.8 9 12.2 12 12.2H13.6M2.8 12.2H5.6C8.6 12.2 9 5.8 12 5.8H13.6" stroke="#fff" stroke-width="1.7" fill="none"/><path d="M13 3.2L16.2 5.8L13 8.4ZM13 9.6L16.2 12.2L13 14.8Z" fill="#fff"/></g><g transform="translate(143,359)"><rect x="0" y="0" width="18" height="18" rx="3" fill="#14a2e6"/><path d="M2.8 5.8H5.6C8.6 5.8 9 12.2 12 12.2H13.6M2.8 12.2H5.6C8.6 12.2 9 5.8 12 5.8H13.6" stroke="#fff" stroke-width="1.7" fill="none"/><path d="M13 3.2L16.2 5.8L13 8.4ZM13 9.6L16.2 12.2L13 14.8Z" fill="#fff"/></g><g transform="translate(453,381)"><path d="M0 15.5V13C0 11 1.6 8.2 3 6.8C3.6 6.2 4.2 6 5 6H9.2V17H1.2C0.5 17 0 16.3 0 15.5Z" fill="#ececec"/><path d="M2.2 10.5C2.8 9 3.5 7.6 4.6 7.2H8.6V10.5Z" fill="#28c8ff"/><rect x="8.6" y="4" width="9.6" height="9.2" fill="#f9285e"/><rect x="8.6" y="13" width="9.6" height="4" fill="#dedede"/><path d="M13.4 6.2L14.1 8L15.9 8.7L14.1 9.4L13.4 11.2L12.7 9.4L10.9 8.7L12.7 8Z" fill="#f4fff8"/><rect x="5.6" y="4.2" width="2.6" height="1.8" rx="0.6" fill="#b81b2a"/><circle cx="4.8" cy="16.2" r="2.1" fill="#3f3770"/><circle cx="14.6" cy="16.2" r="2.1" fill="#3f3770"/><circle cx="4.8" cy="16.2" r="0.8" fill="#fff"/><circle cx="14.6" cy="16.2" r="0.8" fill="#fff"/><rect x="-0.4" y="12.4" width="1.3" height="2.6" rx="0.6" fill="#ff7a1a"/></g><g transform="translate(143,403)"><path d="M11.8 0.6L17.8 6.4L5 18.8L4.6 13.4L-0.2 12.9Z" fill="#f8312f"/><circle cx="13.4" cy="5" r="1.1" fill="#1e1e1e"/><path d="M14 4.6L13.4 -0.5M14 4.6L18 3.6" stroke="#d9892a" stroke-width="0.9"/><circle cx="8.8" cy="9.2" r="2" fill="#f4aabb"/></g><g transform="translate(143,447)"><rect x="0" y="0" width="18" height="18" rx="3" fill="#14a2e6"/><path d="M2.8 5.8H5.6C8.6 5.8 9 12.2 12 12.2H13.6M2.8 12.2H5.6C8.6 12.2 9 5.8 12 5.8H13.6" stroke="#fff" stroke-width="1.7" fill="none"/><path d="M13 3.2L16.2 5.8L13 8.4ZM13 9.6L16.2 12.2L13 14.8Z" fill="#fff"/></g><g transform="translate(373,469)"><g fill="none" stroke="#8ecff8" stroke-width="1"><circle cx="9" cy="9" r="8.3"/><ellipse cx="9" cy="9" rx="3.8" ry="8.3"/><path d="M9 0.7V17.3M0.7 9H17.3M2 4.8H16M2 13.2H16"/></g></g><g transform="translate(143,491)"><rect x="0" y="0" width="18" height="18" rx="3" fill="#14a2e6"/><path d="M2.8 5.8H5.6C8.6 5.8 9 12.2 12 12.2H13.6M2.8 12.2H5.6C8.6 12.2 9 5.8 12 5.8H13.6" stroke="#fff" stroke-width="1.7" fill="none"/><path d="M13 3.2L16.2 5.8L13 8.4ZM13 9.6L16.2 12.2L13 14.8Z" fill="#fff"/></g><g transform="translate(383,513)"><path d="M4.4 6.5V3.4A3 3 0 0 1 10.4 3.4V6.5" stroke="#d4d4d4" stroke-width="1.6" fill="none"/><rect x="-0.2" y="5" width="15.6" height="12.4" rx="1.6" fill="#f8c23c"/><path d="M7.6 9V13.6" stroke="#3d3a85" stroke-width="1.6"/><circle cx="7.6" cy="9.4" r="1.3" fill="#3d3a85"/><circle cx="15.6" cy="3.4" r="2.5" fill="#d8d8d8"/><path d="M14.6 5.4L12.9 12.4" stroke="#d8d8d8" stroke-width="1.6"/></g><g transform="translate(143,535)"><g fill="none" stroke="#8ecff8" stroke-width="1"><circle cx="9" cy="9" r="8.3"/><ellipse cx="9" cy="9" rx="3.8" ry="8.3"/><path d="M9 0.7V17.3M0.7 9H17.3M2 4.8H16M2 13.2H16"/></g></g><g transform="translate(143,557)"><path d="M4.4 6.5V3.4A3 3 0 0 1 10.4 3.4V6.5" stroke="#d4d4d4" stroke-width="1.6" fill="none"/><rect x="-0.2" y="5" width="15.6" height="12.4" rx="1.6" fill="#f8c23c"/><path d="M7.6 9V13.6" stroke="#3d3a85" stroke-width="1.6"/><circle cx="7.6" cy="9.4" r="1.3" fill="#3d3a85"/><circle cx="15.6" cy="3.4" r="2.5" fill="#d8d8d8"/><path d="M14.6 5.4L12.9 12.4" stroke="#d8d8d8" stroke-width="1.6"/></g><g transform="translate(143,579)"><g fill="none" stroke="#8ecff8" stroke-width="1"><circle cx="9" cy="9" r="8.3"/><ellipse cx="9" cy="9" rx="3.8" ry="8.3"/><path d="M9 0.7V17.3M0.7 9H17.3M2 4.8H16M2 13.2H16"/></g></g><g transform="translate(143,601)"><path d="M4.4 6.5V3.4A3 3 0 0 1 10.4 3.4V6.5" stroke="#d4d4d4" stroke-width="1.6" fill="none"/><rect x="-0.2" y="5" width="15.6" height="12.4" rx="1.6" fill="#f8c23c"/><path d="M7.6 9V13.6" stroke="#3d3a85" stroke-width="1.6"/><circle cx="7.6" cy="9.4" r="1.3" fill="#3d3a85"/><circle cx="15.6" cy="3.4" r="2.5" fill="#d8d8d8"/><path d="M14.6 5.4L12.9 12.4" stroke="#d8d8d8" stroke-width="1.6"/></g><g transform="translate(143,645)"><path d="M11.1 1.1999999999999993Q13.004 7.176 17.9 9.5Q13.004 11.824 11.1 17.8Q9.196 11.824 4.3 9.5Q9.196 7.176 11.1 1.1999999999999993ZM3.7 1.3000000000000003Q4.428 3.388 6.300000000000001 4.2Q4.428 5.0120000000000005 3.7 7.1Q2.972 5.0120000000000005 1.1 4.2Q2.972 3.388 3.7 1.3000000000000003ZM2.5 10.0Q3.34 12.52 5.5 13.5Q3.34 14.48 2.5 17.0Q1.66 14.48 -0.5 13.5Q1.66 12.52 2.5 10.0Z" fill="#f9c23c"/></g><g transform="translate(143,689)"><path d="M9 0.5L17 4.2V14.4L9 18.6L1 14.4V4.2Z" fill="#fcc874"/><path d="M1 4.2L9 8.4V18.6L1 14.4Z" fill="#e8a046"/><path d="M9 0.5L17 4.2L9 8.4L1 4.2Z" fill="#ffd68e"/><path d="M13 2.3L5 6.3V9.6L7 10.6V7.4L15 3.3Z" fill="#a0604a"/><circle cx="5" cy="15.6" r="0.9" fill="#f0f0f0"/></g><g transform="translate(23,865)"><circle cx="7" cy="7.5" r="6.3" fill="#12a3ea" stroke="#7a5cb0" stroke-width="1.1"/><path d="M11.6 12L15.8 16.4" stroke="#6b56a8" stroke-width="3.6" stroke-linecap="round"/><circle cx="9.4" cy="4.2" r="1.1" fill="#e8f6ff"/></g></svg>
<div id="frame"></div></div></body></html>
